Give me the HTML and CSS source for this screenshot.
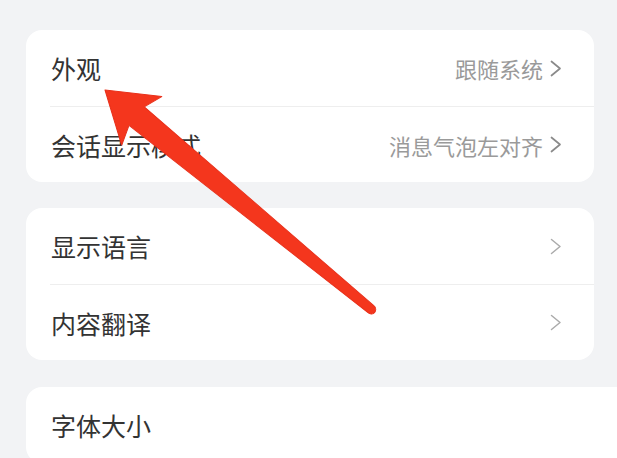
FILE: index.html
```html
<!DOCTYPE html>
<html lang="zh-CN">
<head>
<meta charset="utf-8">
<title>设置</title>
<link rel="stylesheet" href="styles.css">
</head>
<body>
<div class="page">
  <section class="card">
    <div class="row">
      <span class="label">外观</span>
      <span class="value">跟随系统<svg class="chev" viewBox="0 0 12 17"><path d="M1.5 1.5 L10 8.5 L1.5 15.5"/></svg></span>
    </div>
    <div class="row">
      <span class="label">会话显示模式</span>
      <span class="value">消息气泡左对齐<svg class="chev" viewBox="0 0 12 17"><path d="M1.5 1.5 L10 8.5 L1.5 15.5"/></svg></span>
    </div>
  </section>
  <section class="card">
    <div class="row">
      <span class="label">显示语言</span>
      <span class="value"><svg class="chev light" viewBox="0 0 12 17"><path d="M1.5 1.5 L10 8.5 L1.5 15.5"/></svg></span>
    </div>
    <div class="row">
      <span class="label">内容翻译</span>
      <span class="value"><svg class="chev light" viewBox="0 0 12 17"><path d="M1.5 1.5 L10 8.5 L1.5 15.5"/></svg></span>
    </div>
  </section>
  <section class="card wide">
    <div class="row">
      <span class="label">字体大小</span>
    </div>
  </section>
</div>
<svg class="arrow" width="617" height="458" viewBox="0 0 617 458">
  <g transform="translate(105 90) rotate(39.5)">
    <path d="M0 0 L48 -31 L41 -12 L345 -4.5 A4.5 4.5 0 0 1 345 4.5 L41 12 L48 32 Z"/>
  </g>
</svg>
</body>
</html>
```
FILE: styles.css
```css
html, body {
  margin: 0;
  padding: 0;
}
body {
  background: #f2f3f5;
  font-family: "Noto Sans CJK SC", "Noto Sans", sans-serif;
  overflow: hidden;
  width: 617px;
  height: 458px;
  position: relative;
}
.page {
  padding: 30px 23px 0 26px;
  display: flex;
  flex-direction: column;
  gap: 26px;
}
.card {
  background: #ffffff;
  border-radius: 16px;
  overflow: hidden;
}
.card.wide {
  margin-right: -23px;
  margin-top: 1px;
  border-radius: 16px 0 0 16px;
}
.row {
  height: 76px;
  margin-left: 24px;
  padding-right: 32px;
  display: flex;
  align-items: center;
  justify-content: space-between;
  box-sizing: border-box;
}
.row + .row {
  border-top: 1px solid #eeeeee;
}
.label {
  font-size: 25px;
  color: #333333;
  padding-left: 1px;
}
.value {
  display: flex;
  align-items: center;
  gap: 7px;
  font-size: 22px;
  color: #9a9a9a;
}
.chev {
  width: 12px;
  height: 17px;
  fill: none;
  stroke: #8a8a8a;
  stroke-width: 1.7;
  stroke-linecap: round;
  stroke-linejoin: round;
}
.chev.light {
  stroke: #ababab;
  stroke-width: 1.5;
}
.arrow {
  position: absolute;
  left: 0;
  top: 0;
  pointer-events: none;
}
.arrow path {
  fill: #f4361d;
  stroke: #e8301a;
  stroke-width: 1;
  stroke-linejoin: round;
}
```
